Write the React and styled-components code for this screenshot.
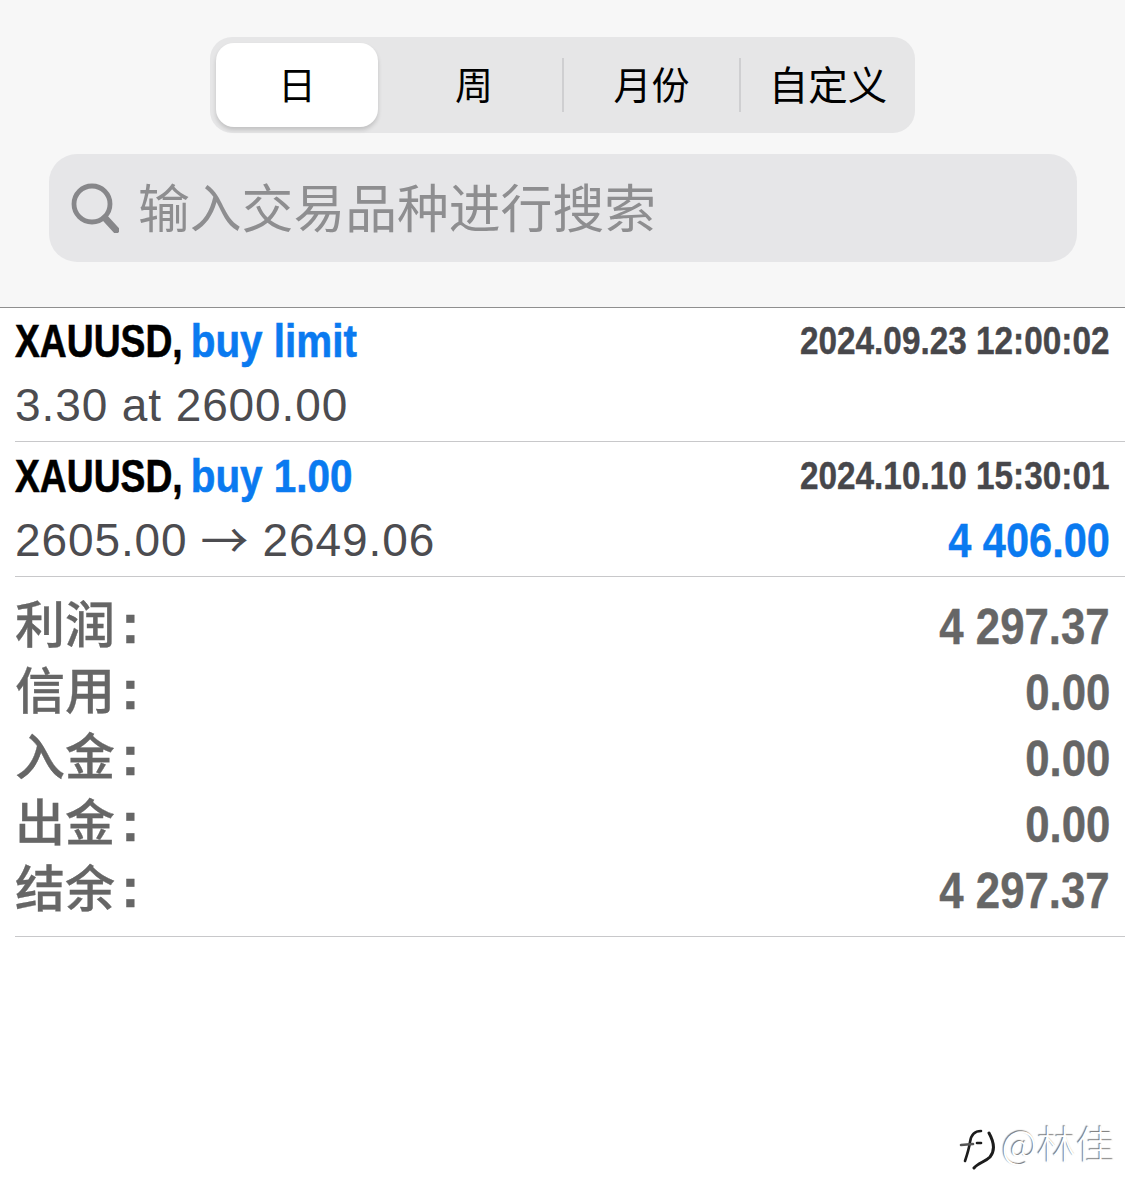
import React from 'react'
import styled, { createGlobalStyle } from 'styled-components'

const CJK = '"Noto Sans CJK SC", sans-serif'
const LATIN = '"Liberation Sans", "Noto Sans CJK SC", sans-serif'

const summary = [
    { label: '利润', value: '4 297.37' },
    { label: '信用', value: '0.00' },
    { label: '入金', value: '0.00' },
    { label: '出金', value: '0.00' },
    { label: '结余', value: '4 297.37' },
]

function SearchIcon() {
    return (
        <SearchSvg viewBox="0 0 48 50" fill="none" stroke="#87878a" strokeLinecap="round">
            <circle cx="21" cy="21" r="18" strokeWidth="4.8" />
            <path d="M34 35 L45 47" strokeWidth="7" />
        </SearchSvg>
    )
}

function App() {
    return (
        <Page>
            <GlobalStyle />
            <Header>
                <Segmented>
                    <Tab width={162} active>日</Tab>
                    <Tab width={184} inset={8}>周</Tab>
                    <Divider />
                    <Tab width={175}>月份</Tab>
                    <Divider />
                    <Tab width={174} size={39.5}>自定义</Tab>
                </Segmented>
                <SearchBar>
                    <SearchIcon />
                    <Placeholder>输入交易品种进行搜索</Placeholder>
                </SearchBar>
            </Header>

            <Deal height={134} top={3}>
                <DealTop>
                    <Title>XAUUSD, <Blue>buy limit</Blue></Title>
                    <DateText>2024.09.23 12:00:02</DateText>
                </DealTop>
                <DealBottom>
                    <Price>3.30 at 2600.00</Price>
                </DealBottom>
            </Deal>

            <Deal height={135} top={4}>
                <DealTop>
                    <Title>XAUUSD, <Blue>buy 1.00</Blue></Title>
                    <DateText>2024.10.10 15:30:01</DateText>
                </DealTop>
                <DealBottom>
                    <Price>2605.00<Arrow>→</Arrow>2649.06</Price>
                    <Profit>4 406.00</Profit>
                </DealBottom>
            </Deal>

            <Summary>
                {summary.map((row) => (
                    <SummaryRow key={row.label}>
                        <SummaryLabel>{row.label}<Colon>:</Colon></SummaryLabel>
                        <SummaryValue>{row.value}</SummaryValue>
                    </SummaryRow>
                ))}
            </Summary>

            <Watermark>
                <WatermarkLogo viewBox="0 0 42 55" fill="none" stroke="#1c1c1c" strokeWidth="2.6" strokeLinecap="round">
                    <path d="M25 13 C18 13 15 17 14 24 C13 31 11 37 9 43" />
                    <path d="M5 27 L17 26" stroke="#555" />
                    <path d="M21 25 L25 25" />
                    <path d="M33 15 C38 24 39 33 34 39 C29 44 22 45 18 50" strokeWidth="3" />
                </WatermarkLogo>
                <WatermarkText>@林佳</WatermarkText>
            </Watermark>
        </Page>
    )
}

export default App

const GlobalStyle = createGlobalStyle`
    html, body {
        margin: 0;
        padding: 0;
        background: #fff;
    }
`

const Page = styled.div`
    position: relative;
    width: 1125px;
    height: 1203px;
    overflow: hidden;
    background: #fff;
    font-family: ${LATIN};
`

const Header = styled.div`
    display: flex;
    flex-direction: column;
    align-items: center;
    gap: 21px;
    box-sizing: border-box;
    height: 308px;
    padding-top: 37px;
    background: #f7f7f7;
    border-bottom: 1px solid #8f8f8f;
`

const Segmented = styled.div`
    display: flex;
    align-items: center;
    box-sizing: border-box;
    width: 705px;
    height: 96px;
    padding: 6px;
    background: #e6e6e7;
    border-radius: 22px;
`

const Tab = styled.div`
    display: flex;
    align-items: center;
    justify-content: center;
    flex: none;
    box-sizing: border-box;
    width: ${(p) => p.width}px;
    height: 84px;
    padding: 0 0 6px ${(p) => p.inset || 0}px;
    border-radius: 18px;
    background: ${(p) => (p.active ? '#fff' : 'transparent')};
    box-shadow: ${(p) => (p.active ? '0 3px 4px rgba(0, 0, 0, 0.16)' : 'none')};
    font-family: ${CJK};
    font-size: ${(p) => p.size || 38}px;
    color: #000;
    white-space: nowrap;
`

const Divider = styled.div`
    flex: none;
    width: 2px;
    height: 54px;
    background: #cfcfd1;
`

const SearchBar = styled.div`
    display: flex;
    align-items: center;
    gap: 19px;
    box-sizing: border-box;
    width: 1028px;
    height: 108px;
    padding-left: 22px;
    margin-left: 1px;
    background: #e6e6e8;
    border-radius: 28px;
`

const SearchSvg = styled.svg`
    flex: none;
    width: 48px;
    height: 50px;
`

const Placeholder = styled.span`
    padding-bottom: 6px;
    font-family: ${CJK};
    font-size: 51.8px;
    color: #8e8e90;
    white-space: nowrap;
`

const Deal = styled.div`
    box-sizing: border-box;
    height: ${(p) => p.height}px;
    margin-left: 15px;
    padding: ${(p) => p.top}px 16px 0 0;
    border-bottom: 1px solid #c8c8ca;
`

const DealTop = styled.div`
    display: flex;
    justify-content: space-between;
    align-items: center;
    height: 60px;
`

const DealBottom = styled.div`
    display: flex;
    justify-content: space-between;
    align-items: center;
    height: 62px;
    margin-top: 3px;
`

const Title = styled.div`
    flex: none;
    font-size: 46px;
    font-weight: 700;
    color: #000;
    white-space: pre;
    -webkit-text-stroke: 0.6px currentColor;
    transform: scaleX(0.81);
    transform-origin: left center;
`

const Blue = styled.span`
    display: inline-block;
    margin-left: -3px;
    color: #0a7af0;
    transform: scaleX(1.084);
    transform-origin: left center;
`

const DateText = styled.div`
    flex: none;
    font-size: 38.5px;
    font-weight: 700;
    color: #47474b;
    white-space: nowrap;
    -webkit-text-stroke: 0.4px currentColor;
    transform: scaleX(0.866);
    transform-origin: right center;
`

const Price = styled.div`
    display: flex;
    align-items: center;
    font-size: 46px;
    letter-spacing: 0.9px;
    color: #4c4c50;
    white-space: nowrap;
`

const Arrow = styled.span`
    margin: 0 14px 6px 13px;
    font-family: ${CJK};
    font-size: 48px;
    letter-spacing: 0;
    line-height: 1;
`

const Profit = styled.div`
    margin-right: -1px;
    font-size: 48px;
    font-weight: 700;
    color: #0a7af0;
    white-space: pre;
    -webkit-text-stroke: 0.4px currentColor;
    transform: scaleX(0.865);
    transform-origin: right center;
`

const Summary = styled.div`
    margin-left: 15px;
    padding: 15px 15px 14px 0;
    border-bottom: 1px solid #c8c8ca;
`

const SummaryRow = styled.div`
    display: flex;
    justify-content: space-between;
    align-items: center;
    height: 66px;
    color: #666;
`

const SummaryLabel = styled.div`
    padding-bottom: 8px;
    font-family: ${CJK};
    font-size: 50px;
    font-weight: 500;
    -webkit-text-stroke: 0.3px currentColor;
    white-space: nowrap;
`

const Colon = styled.span`
    margin-left: 6px;
    font-family: "Liberation Sans", sans-serif;
    font-size: 56px;
    font-weight: 700;
`

const SummaryValue = styled.div`
    padding-top: 4px;
    font-size: 50px;
    font-weight: 700;
    white-space: pre;
    -webkit-text-stroke: 0.4px currentColor;
    transform: scaleX(0.875);
    transform-origin: right center;
`

const Watermark = styled.div`
    position: absolute;
    right: 10px;
    top: 1114px;
    display: flex;
    align-items: center;
    gap: 4px;
`

const WatermarkLogo = styled.svg`
    width: 42px;
    height: 55px;
`

const WatermarkText = styled.span`
    margin-bottom: 7px;
    font-family: ${CJK};
    font-size: 39px;
    font-weight: 300;
    color: #fff;
    text-shadow: -1px -1px 1px rgba(0, 0, 0, 0.55);
    white-space: nowrap;
`
